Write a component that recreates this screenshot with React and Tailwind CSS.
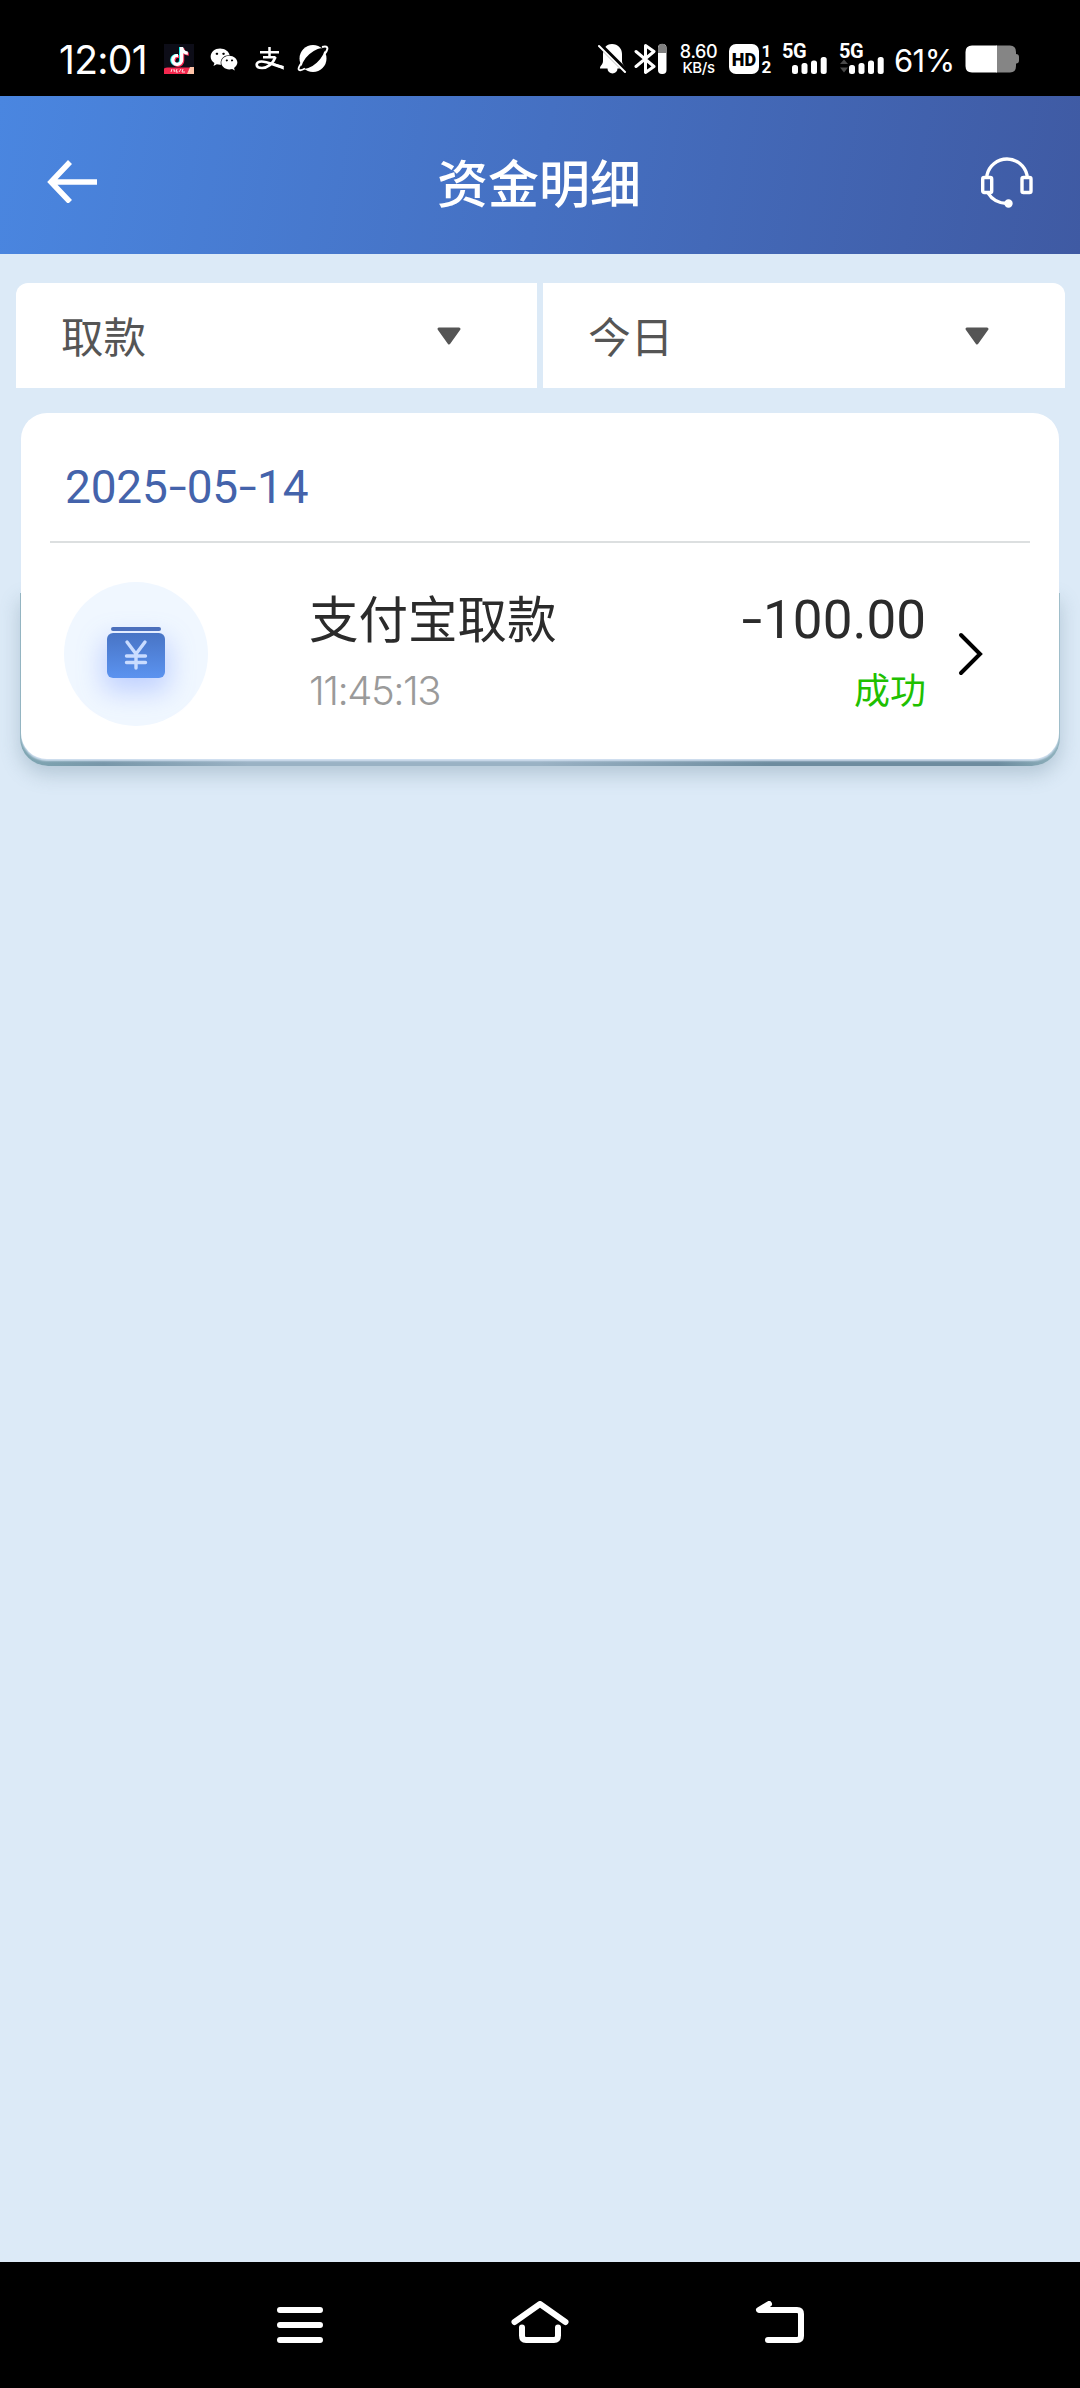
import React from "react";
import { FaWeixin, FaTiktok } from "react-icons/fa";

const cjk = "font-['Noto_Sans_CJK_SC',sans-serif]";

function DouyinIcon() {
  return (
    <div className="relative ml-[18px] h-[30px] w-[30px] overflow-hidden bg-[#0d0d18]">
      <FaTiktok className="absolute left-[6px] top-[3px] h-[19px] w-[17px] text-[#25f4ee]" />
      <FaTiktok className="absolute left-[8px] top-[4px] h-[19px] w-[17px] text-[#fe2c55]" />
      <FaTiktok className="absolute left-[7px] top-[3px] h-[19px] w-[17px] text-white" />
      <svg className="absolute bottom-0 left-0" width="30" height="7" viewBox="0 0 30 7">
        <path d="M0 1.5Q2 0 5 .5H30V7H0Z" fill="#f5284f" />
        <path d="M23 7L26 0H30V7Z" fill="#ffc3a8" />
        <path d="M8 2L7 5M9 3H11L10 5M13 2L12 5H14M17 2L15 5M19 2L18 5H21M26 2L25 5" stroke="#ffd5dc" strokeWidth="1" fill="none" />
      </svg>
    </div>
  );
}

function AlipayIcon() {
  return (
    <svg className="ml-[17px]" width="30" height="26" viewBox="0 0 30 26" fill="none" stroke="#fff">
      <path d="M5 6.2H24M14.5 1V11M8 11.2H20.5" strokeWidth="2.5" />
      <path d="M20.5 11C18 18 12 22 7 22C0 22 0 15.5 6.5 15.5C12 15.5 19 19 28 21.5" strokeWidth="2.7" />
      <path d="M19 18L28 20.500V22.500Z" fill="#fff" strokeWidth="1.5" />
    </svg>
  );
}

function PlanetIcon() {
  return (
    <svg className="ml-[12px]" width="32" height="30" viewBox="0 0 32 30">
      <circle cx="16" cy="14.5" r="13.5" fill="#fff" />
      <ellipse cx="16" cy="14.5" rx="14" ry="5.600" transform="rotate(-42 16 14.5)" fill="#000" />
      <path d="M25 3Q31 1.500 30.300 5Q30 7 27.500 10M4.500 19Q.5 24.500 2 25.800Q3.500 27 8 24.500" fill="none" stroke="#fff" strokeWidth="2" />
    </svg>
  );
}

function BellOff() {
  return (
    <svg width="30" height="32" viewBox="0 0 30 32">
      <path d="M14 1C20 1 24 5.500 24 11V18C24 22 27 22 27 25.500H19.500A5 5 0 0 1 9.500 25.500H2C2 22 5 22 5 18V11C5 5.500 8 1 14 1Z" fill="#fff" />
      <path d="M0 0L29 29" stroke="#000" strokeWidth="5" />
      <path d="M1 3L27 29" stroke="#fff" strokeWidth="2" strokeLinecap="round" />
    </svg>
  );
}

function Bluetooth() {
  return (
    <svg className="ml-[6px]" width="34" height="32" viewBox="0 0 34 32">
      <path d="M2 8.500L20 23.500L11.500 29.500V2.500L20 8.500L2 23.500" fill="none" stroke="#fff" strokeWidth="3" strokeLinejoin="round" strokeLinecap="round" />
      <rect x="24" y="1" width="8.500" height="30" rx="4" fill="#fff" />
      <path d="M24 10V5A4 4 0 0 1 32.500 5V10Z" fill="#808080" />
    </svg>
  );
}

function Signal({ arrows }) {
  return (
    <div className="relative h-[32px] w-[46px]">
      <div className="font-['Roboto',sans-serif] text-[20px] font-bold leading-[16px] tracking-[-0.5px] text-white">5G</div>
      <svg className="absolute left-0 top-0" width="46" height="32" viewBox="0 0 46 32">
        {arrows && <path d="M1 21L5 16.500L9 21ZM1 24.500H9L5 29.500Z" fill="#4a4a4a" />}
        <g fill="#fff">
          <rect x="10" y="22" width="6" height="9" rx="2.500" />
          <rect x="19.500" y="20" width="6" height="11" rx="2.500" />
          <rect x="29" y="17.500" width="6" height="13.500" rx="2.500" />
          <rect x="38.700" y="14" width="6" height="17" rx="2.500" />
        </g>
      </svg>
    </div>
  );
}

function Battery() {
  return (
    <svg className="ml-[11px]" width="55" height="28" viewBox="0 0 55 28">
      <path d="M31 .500H45Q51 .500 51 7V9Q54 9 54 12V15.500Q54 18.500 51 18.500V21Q51 27.500 45 27.500H31Z" fill="#858585" />
      <path d="M32 .500H7Q.500 .500 .500 7V21Q.500 27.500 7 27.500H32Z" fill="#fff" />
    </svg>
  );
}

function StatusBar() {
  return (
    <header className="flex h-[96px] items-center bg-black pl-[59px] pt-[22px] text-white">
      <div className="w-[87px] whitespace-nowrap font-['Inter',sans-serif] text-[39px] leading-none tracking-[-0.7px]">12:01</div>
      <DouyinIcon />
      <FaWeixin className="ml-[16px] h-[29px] w-[28px]" />
      <AlipayIcon />
      <PlanetIcon />
      <div className="ml-[269px] flex items-center">
        <BellOff />
        <Bluetooth />
        <div className="ml-[11px] flex w-[39px] flex-col items-center gap-[2px] font-['Inter',sans-serif]">
          <div className="h-[15px] text-[18px] font-medium leading-[15px] tracking-[-0.4px]">8.60</div>
          <div className="h-[14px] text-[15px] font-medium leading-[14px] tracking-[-0.4px]">KB/s</div>
        </div>
        <div className="ml-[11px] flex h-[30px] w-[30px] items-center justify-center rounded-[7px] bg-white font-['Roboto',sans-serif] text-[18px] font-black text-black">HD</div>
        <div className="ml-[2px] w-[11px] text-center font-['Roboto',sans-serif] text-[17px] font-bold leading-[16px]">
          <div>1</div>
          <div>2</div>
        </div>
        <div className="ml-[10px] flex gap-[11px]">
          <Signal />
          <Signal arrows />
        </div>
        <div className="ml-[9px] w-[60px] whitespace-nowrap pt-[2px] font-['Inter',sans-serif] text-[31px] leading-none tracking-[-0.6px]">61%</div>
        <Battery />
      </div>
    </header>
  );
}

function TitleBar() {
  return (
    <div className="flex h-[158px] items-center justify-between bg-[linear-gradient(100deg,#4a86e0_0%,#4570c2_50%,#3f5aa3_100%)] pl-[46px] pr-[46px] pt-[12px]">
      <svg width="54" height="44" viewBox="0 0 54 44" fill="none" stroke="#fff" strokeWidth="5.500">
        <path d="M51 23H5M24 3L5 23L24 43" />
      </svg>
      <h1 className={`${cjk} mr-[2px] pt-[1px] text-[51px] font-medium leading-none text-white`}>资金明细</h1>
      <svg width="54" height="54" viewBox="0 0 54 54" fill="none" stroke="#fff" strokeWidth="3.400">
        <path d="M7 24V21A20.500 20.500 0 0 1 47 21V24" />
        <rect x="2.700" y="23.500" width="9" height="15" rx="1.500" />
        <rect x="42" y="23.500" width="9" height="15" rx="1.500" />
        <path d="M8 39Q14 49 27 49.500" />
        <circle cx="28.500" cy="49.500" r="3.200" fill="#fff" strokeWidth="2" />
      </svg>
    </div>
  );
}

function Filter({ label, side }) {
  return (
    <button className={`flex h-[105px] flex-1 items-center justify-between bg-white pl-[45px] pr-[75px] ${side === "left" ? "rounded-tl-[12px]" : "rounded-tr-[12px]"}`}>
      <span className={`${cjk} text-[42.500px] leading-none text-[#555]`}>{label}</span>
      <svg width="26" height="20" viewBox="0 0 26 20">
        <path d="M3 3H23L13 17Z" fill="#555" stroke="#555" strokeWidth="3" strokeLinejoin="round" />
      </svg>
    </button>
  );
}

function Dash() {
  return <span className="inline-block w-[0.460em] -translate-y-[0.05em] scale-x-[1.15] text-center font-['Inter',sans-serif] font-normal text-[0.9em]">-</span>;
}

function MoneyIcon() {
  return (
    <div className="flex h-[144px] w-[144px] items-center justify-center rounded-full bg-[#f0f7ff]">
      <div className="-mt-[4px] flex flex-col items-center">
        <div className="h-[4px] w-[50px] rounded-[2px] bg-[#4a6eb8]" />
        <div className="mt-[2px] flex h-[45px] w-[58px] items-center justify-center rounded-[6px] bg-gradient-to-b from-[#4874c5] to-[#5b93f0] shadow-[0_10px_26px_4px_rgba(110,145,255,0.36)]">
          <svg width="24" height="32" viewBox="0 0 24 32" fill="none" stroke="#c9dcff" strokeWidth="3.400" strokeLinecap="round">
            <path d="M3 3L12 15L21 3M12 15V29M2.500 17H21.500M2.500 23.500H21.500" />
          </svg>
        </div>
      </div>
    </div>
  );
}

function RecordCard() {
  return (
    <section className="relative mx-[20px] mt-[25px] h-[353px]">
      <div className="absolute inset-x-0 bottom-0 h-[173px] rounded-b-[28px] bg-[linear-gradient(90deg,#7fa6b2_0%,#7897a9_8%,#9ab2c4_22%,#9ab2c4_50%,#6d8c9f_72%,#6d8c9f_94%,#8fb2bd_100%)] shadow-[0_8px_20px_rgba(90,120,140,0.32)]" />
      <div className="relative mx-px flex h-[346px] flex-col rounded-[26px] bg-white shadow-[0_2px_2px_rgba(220,232,248,0.9)]">
        <div className="mx-[29px] flex h-[130px] items-center border-b-2 border-[#dcdfe0] pl-[15px] pt-[20px]">
          <time className="whitespace-nowrap font-['Roboto',sans-serif] text-[46px] leading-none tracking-[-0.2px] text-[#4463ab]">2025<Dash />05<Dash />14</time>
        </div>
        <div className="flex items-center pl-[43px] pt-[39px]">
          <MoneyIcon />
          <div className="ml-[101px] flex w-[260px] flex-col">
            <span className={`${cjk} whitespace-nowrap text-[49.500px] leading-[58px] text-[#2b2b2b]`}>支付宝取款</span>
            <span className="mt-[15px] font-['Inter',sans-serif] text-[40px] font-light leading-[60px] tracking-[-1.500px] text-[#9a9a9a]">11:45:13</span>
          </div>
          <div className="flex w-[357px] flex-col items-end">
            <span className="whitespace-nowrap pt-[2px] font-['Roboto',sans-serif] text-[53px] leading-[60px] text-[#2b2b2b]">
              <Dash />100.00
            </span>
            <span className={`${cjk} mb-[2px] mt-[7px] text-[36px] leading-[60px] text-[#20c000]`}>成功</span>
          </div>
          <svg className="ml-[31px]" width="28" height="44" viewBox="0 0 28 44" fill="none" stroke="#000" strokeWidth="4" strokeLinecap="round">
            <path d="M4 3L23 22L4 41" />
          </svg>
        </div>
      </div>
    </section>
  );
}

function NavBar() {
  return (
    <nav className="flex h-[126px] items-center justify-center gap-[180px] bg-black">
      <svg width="60" height="48" viewBox="0 0 60 48" stroke="#fff" strokeWidth="6" strokeLinecap="round">
        <path d="M10 9H50M10 24H50M10 39H50" />
      </svg>
      <svg width="60" height="48" viewBox="0 0 60 48" fill="none" stroke="#fff" strokeWidth="6" strokeLinecap="round" strokeLinejoin="round">
        <path d="M4.500 21L30 3L55.500 21M12 26.500V34.500Q12 39 16 39H44Q48 39 48 34.500V26.500" />
      </svg>
      <svg width="60" height="48" viewBox="0 0 60 48" fill="none" stroke="#fff" strokeWidth="6" strokeLinecap="round" strokeLinejoin="round">
        <path d="M19 3L9 9H47Q51 9 51 13V35Q51 39 47 39H18" />
      </svg>
    </nav>
  );
}

export default function App() {
  return (
    <div className="flex h-[2388px] w-[1080px] flex-col overflow-hidden bg-[#dceaf7]">
      <StatusBar />
      <TitleBar />
      <main className="flex-1 pt-[29px]">
        <div className="ml-[16px] mr-[15.500px] flex gap-[6px]">
          <Filter label="取款" side="left" />
          <Filter label="今日" side="right" />
        </div>
        <RecordCard />
      </main>
      <NavBar />
    </div>
  );
}
